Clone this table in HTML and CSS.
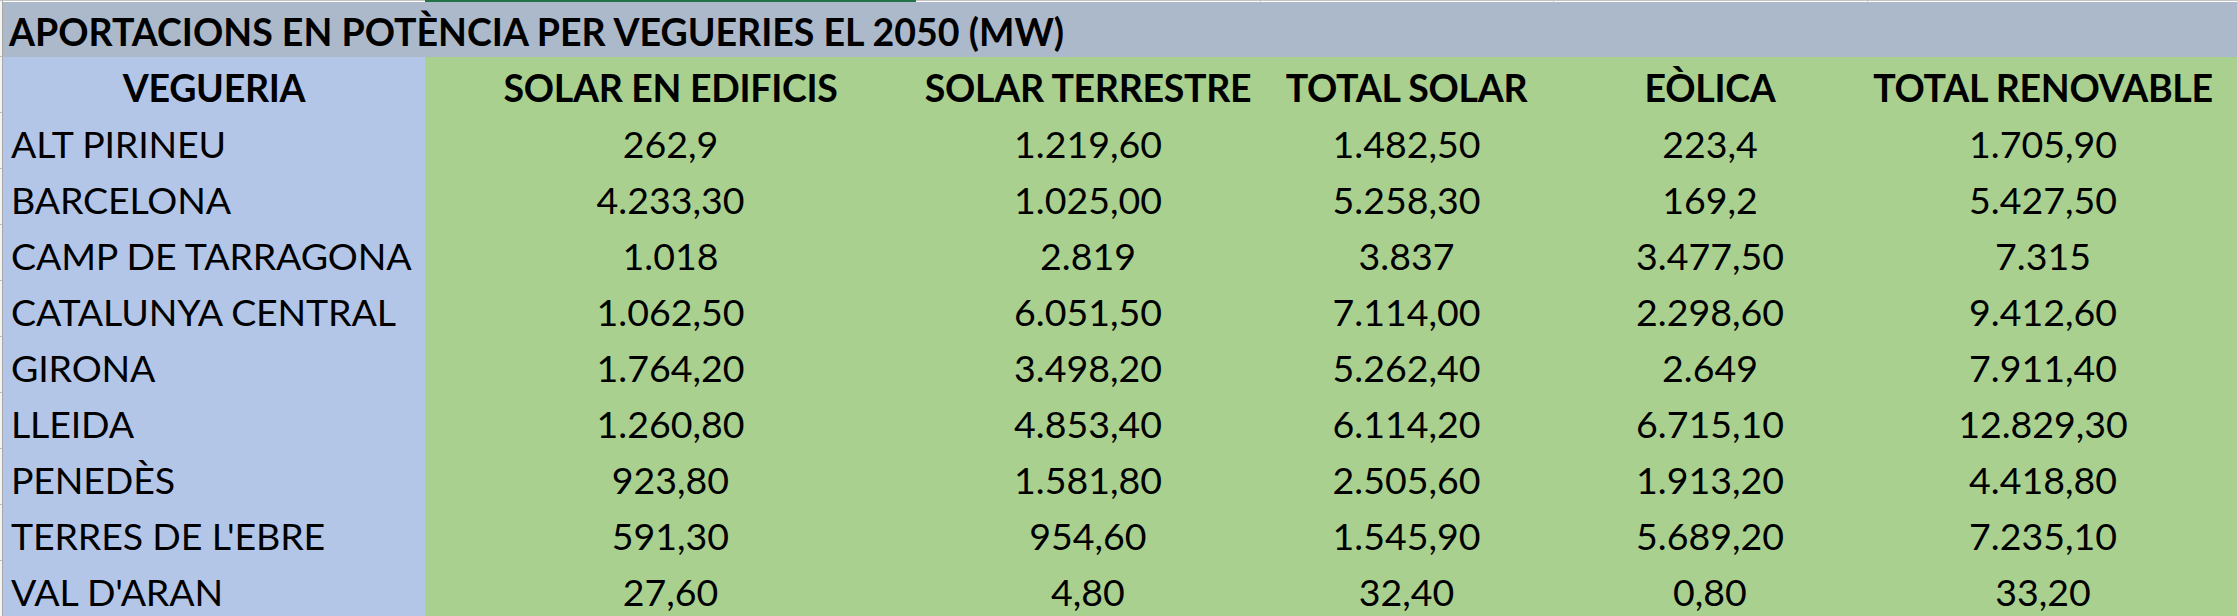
FILE: index.html
```html
<!DOCTYPE html>
<html lang="ca">
<head>
<meta charset="utf-8">
<title>Aportacions en potència per vegueries el 2050 (MW)</title>
<link rel="stylesheet" href="styles.css">
</head>
<body>
<div class="sheet">
  <div class="top rh"></div>
  <div class="top"></div>
  <div class="top sel"></div>
  <div class="top"></div>
  <div class="top sep"></div>
  <div class="top sep"></div>
  <div class="top sep"></div>
  <div class="top"></div>

  <div class="rh title-h"></div>
  <div class="title">APORTACIONS EN POTÈNCIA PER VEGUERIES EL 2050 (MW)</div>

  <div class="rh"></div>
  <div class="cell name head center">VEGUERIA</div>
  <div class="cell num head">SOLAR EN EDIFICIS</div>
  <div class="cell num head">SOLAR TERRESTRE</div>
  <div class="cell num head">TOTAL SOLAR</div>
  <div class="cell num head">EÒLICA</div>
  <div class="cell num head">TOTAL RENOVABLE</div>
  <div class="cell num"></div>

  <div class="rh"></div>
  <div class="cell name">ALT PIRINEU</div>
  <div class="cell num">262,9</div>
  <div class="cell num">1.219,60</div>
  <div class="cell num">1.482,50</div>
  <div class="cell num">223,4</div>
  <div class="cell num">1.705,90</div>
  <div class="cell num"></div>

  <div class="rh"></div>
  <div class="cell name">BARCELONA</div>
  <div class="cell num">4.233,30</div>
  <div class="cell num">1.025,00</div>
  <div class="cell num">5.258,30</div>
  <div class="cell num">169,2</div>
  <div class="cell num">5.427,50</div>
  <div class="cell num"></div>

  <div class="rh"></div>
  <div class="cell name">CAMP DE TARRAGONA</div>
  <div class="cell num">1.018</div>
  <div class="cell num">2.819</div>
  <div class="cell num">3.837</div>
  <div class="cell num">3.477,50</div>
  <div class="cell num">7.315</div>
  <div class="cell num"></div>

  <div class="rh"></div>
  <div class="cell name">CATALUNYA CENTRAL</div>
  <div class="cell num">1.062,50</div>
  <div class="cell num">6.051,50</div>
  <div class="cell num">7.114,00</div>
  <div class="cell num">2.298,60</div>
  <div class="cell num">9.412,60</div>
  <div class="cell num"></div>

  <div class="rh"></div>
  <div class="cell name">GIRONA</div>
  <div class="cell num">1.764,20</div>
  <div class="cell num">3.498,20</div>
  <div class="cell num">5.262,40</div>
  <div class="cell num">2.649</div>
  <div class="cell num">7.911,40</div>
  <div class="cell num"></div>

  <div class="rh"></div>
  <div class="cell name">LLEIDA</div>
  <div class="cell num">1.260,80</div>
  <div class="cell num">4.853,40</div>
  <div class="cell num">6.114,20</div>
  <div class="cell num">6.715,10</div>
  <div class="cell num">12.829,30</div>
  <div class="cell num"></div>

  <div class="rh"></div>
  <div class="cell name">PENEDÈS</div>
  <div class="cell num">923,80</div>
  <div class="cell num">1.581,80</div>
  <div class="cell num">2.505,60</div>
  <div class="cell num">1.913,20</div>
  <div class="cell num">4.418,80</div>
  <div class="cell num"></div>

  <div class="rh"></div>
  <div class="cell name">TERRES DE L'EBRE</div>
  <div class="cell num">591,30</div>
  <div class="cell num">954,60</div>
  <div class="cell num">1.545,90</div>
  <div class="cell num">5.689,20</div>
  <div class="cell num">7.235,10</div>
  <div class="cell num"></div>

  <div class="rh"></div>
  <div class="cell name">VAL D'ARAN</div>
  <div class="cell num">27,60</div>
  <div class="cell num">4,80</div>
  <div class="cell num">32,40</div>
  <div class="cell num">0,80</div>
  <div class="cell num">33,20</div>
  <div class="cell num"></div>
</div>
</body>
</html>
```

FILE: styles.css
```css
html, body {
  margin: 0;
  padding: 0;
  background: #ffffff;
}

body {
  width: 2237px;
  height: 616px;
  overflow: hidden;
  font-family: Lato, "Liberation Sans", sans-serif;
  color: #000000;
}

.sheet {
  display: grid;
  grid-template-columns: 3px 422px 491px 344px 293px 314px 352px 18px;
  grid-template-rows: 2px 55px repeat(10, 56px);
}

.top {
  background: #ffffff;
  border-top: 1px solid #c4c4c4;
}

.top.sel {
  background: #217346;
  border-top: none;
}

.top.sep {
  box-shadow: inset 1px 0 0 #d0d0d0;
}

.rh {
  background: #f3f3f3;
  border-right: 1px solid #a8a8a8;
  border-bottom: 1px solid #bdbdbd;
  box-sizing: border-box;
}

.top.rh {
  border-bottom: none;
}

.title {
  grid-column: 2 / -1;
  background: #acb9ca;
  font-weight: 700;
  font-size: 37.5px;
  display: flex;
  align-items: center;
  padding: 3px 0 0 6px;
  box-sizing: border-box;
  white-space: nowrap;
}

.cell {
  display: flex;
  align-items: center;
  font-size: 37.5px;
  padding-top: 4px;
  box-sizing: border-box;
  white-space: nowrap;
}

.name {
  background: #b4c6e7;
  padding-left: 8px;
  letter-spacing: -0.15px;
}

.num {
  background: #a9d08e;
  justify-content: center;
}

.head {
  font-weight: 700;
  letter-spacing: -0.3px;
}

.center {
  justify-content: center;
  padding-left: 0;
}
```
